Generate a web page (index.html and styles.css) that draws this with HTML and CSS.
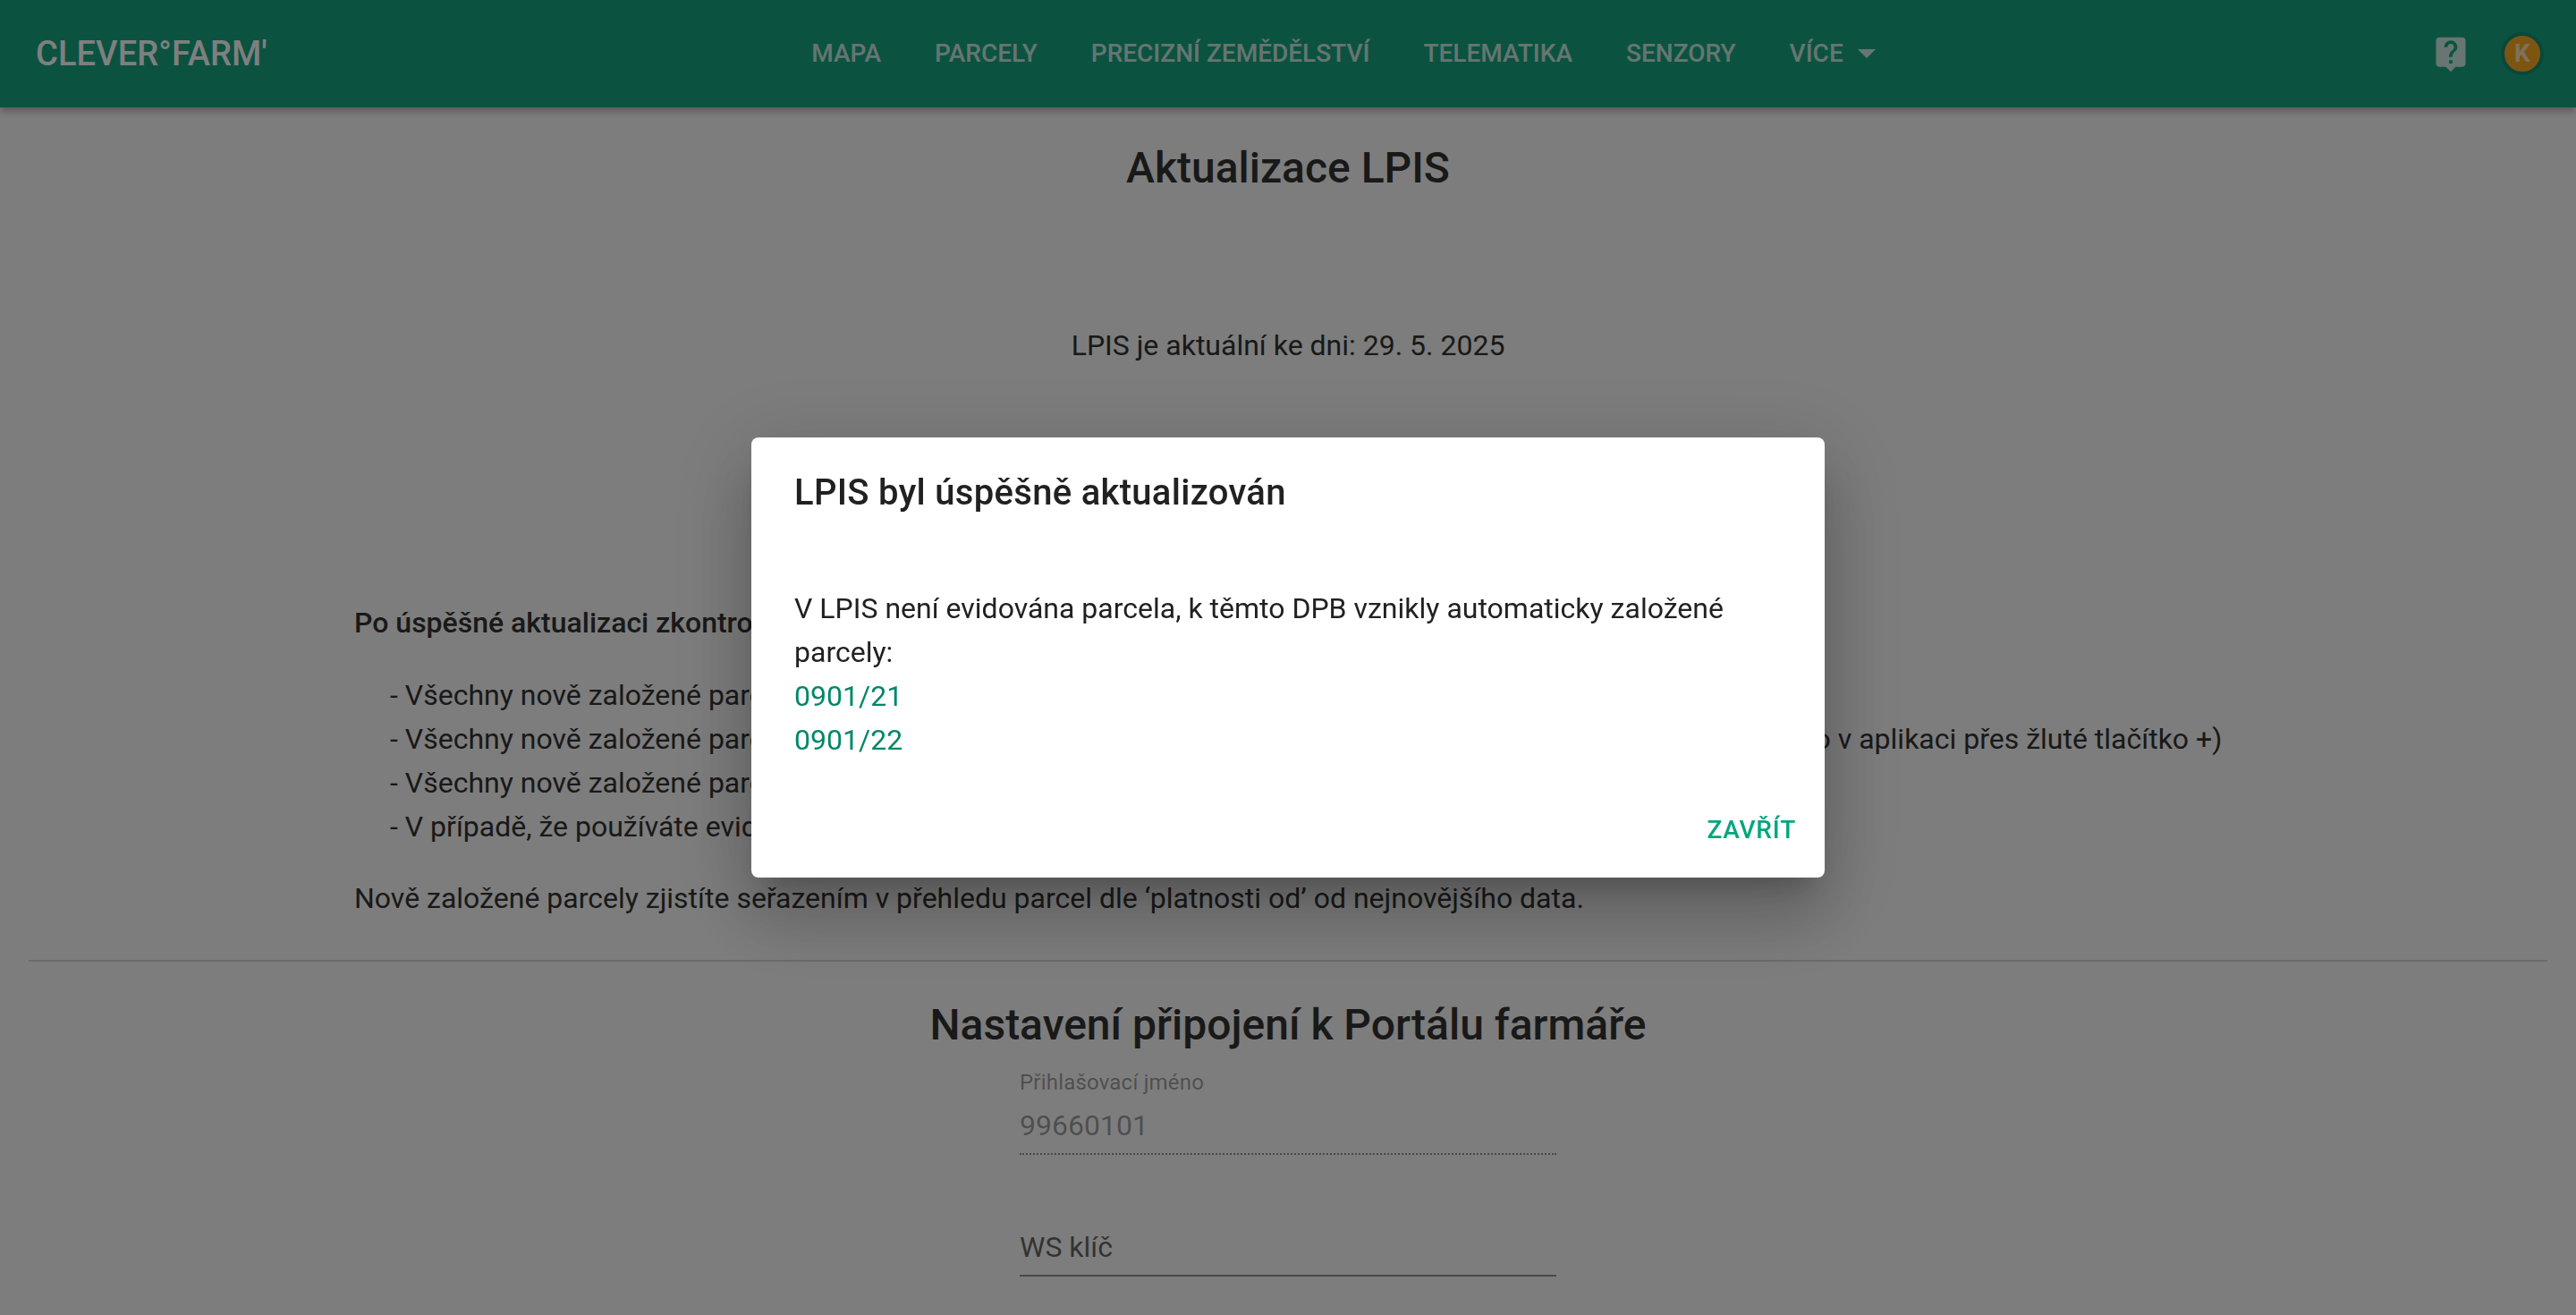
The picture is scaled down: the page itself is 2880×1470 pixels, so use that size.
FILE: index.html
```html
<!DOCTYPE html>
<html lang="cs">
<head>
  <meta charset="UTF-8" />
  <title>Aktualizace LPIS</title>
  <link rel="stylesheet" href="styles.css">
</head>
<body>
  <header class="appbar">
    <div class="logo">CLEVER°FARM'</div>
    <nav class="nav">
      <a class="nav-item">Mapa</a>
      <a class="nav-item">Parcely</a>
      <a class="nav-item">Precizní zemědělství</a>
      <a class="nav-item">Telematika</a>
      <a class="nav-item">Senzory</a>
      <a class="nav-item">Více <span class="caret"></span></a>
    </nav>
    <div class="appbar-right">
      <svg class="help-icon" viewBox="0 0 24 24"><path d="M19 2H5c-1.11 0-2 .9-2 2v14c0 1.1.89 2 2 2h4l3 3 3-3h4c1.1 0 2-.9 2-2V4c0-1.1-.9-2-2-2zm-6 16h-2v-2h2v2zm2.07-7.75l-.9.92C13.45 11.9 13 12.5 13 14h-2v-.5c0-1.1.45-2.1 1.17-2.83l1.24-1.26c.37-.36.59-.86.59-1.41 0-1.1-.9-2-2-2s-2 .9-2 2H8c0-2.21 1.79-4 4-4s4 1.79 4 4c0 .88-.36 1.68-.93 2.25z"/></svg>
      <div class="avatar">K</div>
    </div>
  </header>

  <main class="page">
    <h1 class="page-title">Aktualizace LPIS</h1>
    <p class="lpis-date">LPIS je aktuální ke dni: 29. 5. 2025</p>

    <div class="notes">
      <p class="notes-head">Po úspěšné aktualizaci zkontrolujte:</p>
      <ul class="notes-list">
        <li>- Všechny nově založené parcely</li>
        <li>- Všechny nově založené parcely mají správně nastavený typ i plodinu (případně je lze upravit v detailu parcel nebo v aplikaci přes žluté tlačítko +)</li>
        <li>- Všechny nově založené parcely</li>
        <li>- V případě, že používáte evidenci</li>
      </ul>
      <p class="notes-foot">Nově založené parcely zjistíte seřazením v přehledu parcel dle ‘platnosti od’ od nejnovějšího data.</p>
    </div>

    <hr class="divider">

    <h2 class="section-title">Nastavení připojení k Portálu farmáře</h2>
    <form class="portal-form">
      <div class="field field-disabled">
        <label class="field-label">Přihlašovací jméno</label>
        <div class="field-value">99660101</div>
      </div>
      <div class="field field-empty">
        <div class="field-value">WS klíč</div>
      </div>
    </form>
  </main>

  <div class="overlay">
    <div class="dialog">
      <h3 class="dialog-title">LPIS byl úspěšně aktualizován</h3>
      <div class="dialog-body">
        <div>V LPIS není evidována parcela, k těmto DPB vznikly automaticky založené parcely:</div>
        <a class="parcel-link">0901/21</a>
        <a class="parcel-link">0901/22</a>
      </div>
      <div class="dialog-actions">
        <button class="dialog-btn" type="button">Zavřít</button>
      </div>
    </div>
  </div>
</body>
</html>
```

FILE: styles.css
```css
* {
  box-sizing: border-box;
}
html, body {
  height: 100%;
}
body {
  margin: 0;
  overflow: hidden;
  background: #fafafa;
  color: #333;
  font-family: Roboto, Arial, sans-serif;
  font-size: 32px;
  line-height: 48px;
}

/* appbar */
.appbar {
  display: flex;
  align-items: center;
  height: 120px;
  padding: 0 36px 0 40px;
  background: #16a680;
  box-shadow: 0 4px 8px rgba(0, 0, 0, .3);
}
.logo {
  width: 262px;
  color: #fff;
  font-size: 38px;
  font-weight: 500;
  letter-spacing: .1px;
  white-space: nowrap;
}
.nav {
  display: flex;
  flex: 1;
  justify-content: center;
  gap: 60px;
  padding-right: 16px;
}
.nav-item {
  display: flex;
  align-items: center;
  color: rgba(255, 255, 255, .8);
  font-size: 28px;
  font-weight: 500;
  text-transform: uppercase;
}
.caret {
  width: 0;
  height: 0;
  margin-left: 16px;
  border-left: 10px solid transparent;
  border-right: 10px solid transparent;
  border-top: 10px solid rgba(255, 255, 255, .8);
}
.appbar-right {
  display: flex;
  align-items: center;
  gap: 34px;
}
.help-icon {
  width: 44px;
  height: 44px;
  fill: rgba(255, 255, 255, .8);
}
.avatar {
  display: flex;
  align-items: center;
  justify-content: center;
  width: 48px;
  height: 48px;
  border: 4px solid #148f74;
  border-radius: 50%;
  background: #fbaa22;
  color: rgba(255, 255, 255, .7);
  font-size: 28px;
  font-weight: 700;
}

/* page */
.page-title {
  margin: 32px 0 0;
  font-size: 48px;
  font-weight: 500;
  line-height: 72px;
  text-align: center;
}
.lpis-date {
  margin: 138px 0 0;
  text-align: center;
}
.notes {
  margin: 262px 396px 0;
}
.notes-head {
  margin: 0;
  font-weight: 500;
}
.notes-list {
  margin: 33px 0 31px;
  padding: 0 0 0 40px;
  list-style: none;
  line-height: 49px;
  white-space: nowrap;
}
.notes-foot {
  margin: 0;
}
.divider {
  height: 2px;
  margin: 45px 32px 0;
  border: 0;
  background: #d6d6d6;
}
.section-title {
  margin: 39px 0 0;
  font-size: 48px;
  font-weight: 500;
  line-height: 64px;
  text-align: center;
}
.portal-form {
  display: flex;
  flex-direction: column;
  gap: 79px;
  width: 600px;
  margin: 14px auto 0;
}
.field-label {
  display: block;
  margin-bottom: 6px;
  color: rgba(0, 0, 0, .38);
  font-size: 24px;
  letter-spacing: .2px;
  line-height: 36px;
}
.field-value {
  height: 57px;
}
.field-disabled .field-value {
  border-bottom: 2px dotted rgba(0, 0, 0, .42);
  color: rgba(0, 0, 0, .38);
}
.field-empty .field-value {
  border-bottom: 2px solid rgba(0, 0, 0, .42);
  color: rgba(0, 0, 0, .6);
}

/* dialog */
.overlay {
  position: fixed;
  inset: 0;
  display: flex;
  align-items: center;
  justify-content: center;
  background: rgba(0, 0, 0, .5);
}
.dialog {
  width: 1200px;
  height: 492px;
  padding: 34px 32px 0 48px;
  border-radius: 8px;
  background: #fff;
  color: #212121;
  box-shadow: 0 22px 30px -14px rgba(0, 0, 0, .2), 0 48px 76px 6px rgba(0, 0, 0, .14), 0 18px 92px 16px rgba(0, 0, 0, .12);
}
.dialog-title {
  margin: 0;
  font-size: 40px;
  font-weight: 500;
  letter-spacing: .3px;
  line-height: 56px;
}
.dialog-body {
  margin: 77px 16px 0 0;
  line-height: 49px;
}
.parcel-link {
  display: block;
  color: #008768;
}
.dialog-actions {
  display: flex;
  justify-content: flex-end;
  margin-top: 52px;
}
.dialog-btn {
  padding: 0;
  border: 0;
  background: none;
  color: #00a67e;
  font-family: inherit;
  font-size: 28px;
  font-weight: 500;
  letter-spacing: .8px;
  line-height: 48px;
  text-transform: uppercase;
}
```
